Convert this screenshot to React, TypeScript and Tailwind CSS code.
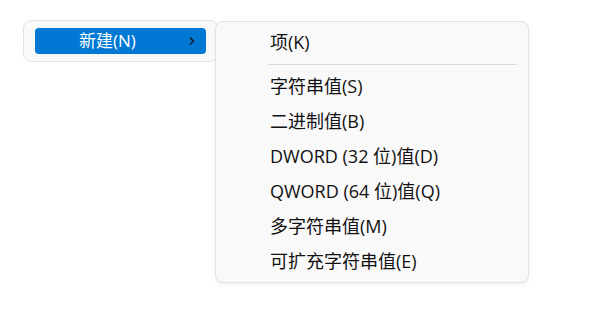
import React from 'react'

const items = ['字符串值(S)', '二进制值(B)', 'DWORD (32 位)值(D)', 'QWORD (64 位)值(Q)', '多字符串值(M)', '可扩充字符串值(E)']

function Chevron() {
  return (
    <svg width="8" height="10" viewBox="0 0 8 10" fill="none">
      <path d="M2 1.5 L5.5 5 L2 8.5" stroke="#1a1a1a" strokeWidth="1.4" />
    </svg>
  )
}

export default function App() {
  return (
    <div
      className="w-[609px] h-[316px] bg-white flex items-start pt-[20px] pl-[23px]"
      style={{ fontFamily: '"Open Sans", "Noto Sans CJK SC", sans-serif' }}
    >
      <div className="w-[195px] h-[42px] rounded-[8px] border border-[#e3e3e3] bg-[#f9f9f9] px-[11px] pt-[7px]">
        <div className="h-[26px] rounded-[4px] bg-[#0078d4] flex items-center pl-[44px] pr-[10px] text-white text-[17px]">
          <span className="flex-1">新建(N)</span>
          <Chevron />
        </div>
      </div>
      <div className="-ml-[3px] mt-[1px] w-[314px] h-[262px] rounded-[8px] border border-[#e3e3e3] bg-[#f9f9f9] pt-[3px] text-[18px] text-[#111] shadow-[0_2px_4px_rgba(0,0,0,0.06)]">
        <div className="h-[35px] flex items-center pl-[54px]">项(K)</div>
        <div className="h-[9px] flex items-center pl-[52px] pr-[11px]">
          <div className="h-px w-full bg-[#d9d9d9]" />
        </div>
        {items.map((t) => (
          <div key={t} className="h-[35px] flex items-center pl-[54px]">
            {t}
          </div>
        ))}
      </div>
    </div>
  )
}
